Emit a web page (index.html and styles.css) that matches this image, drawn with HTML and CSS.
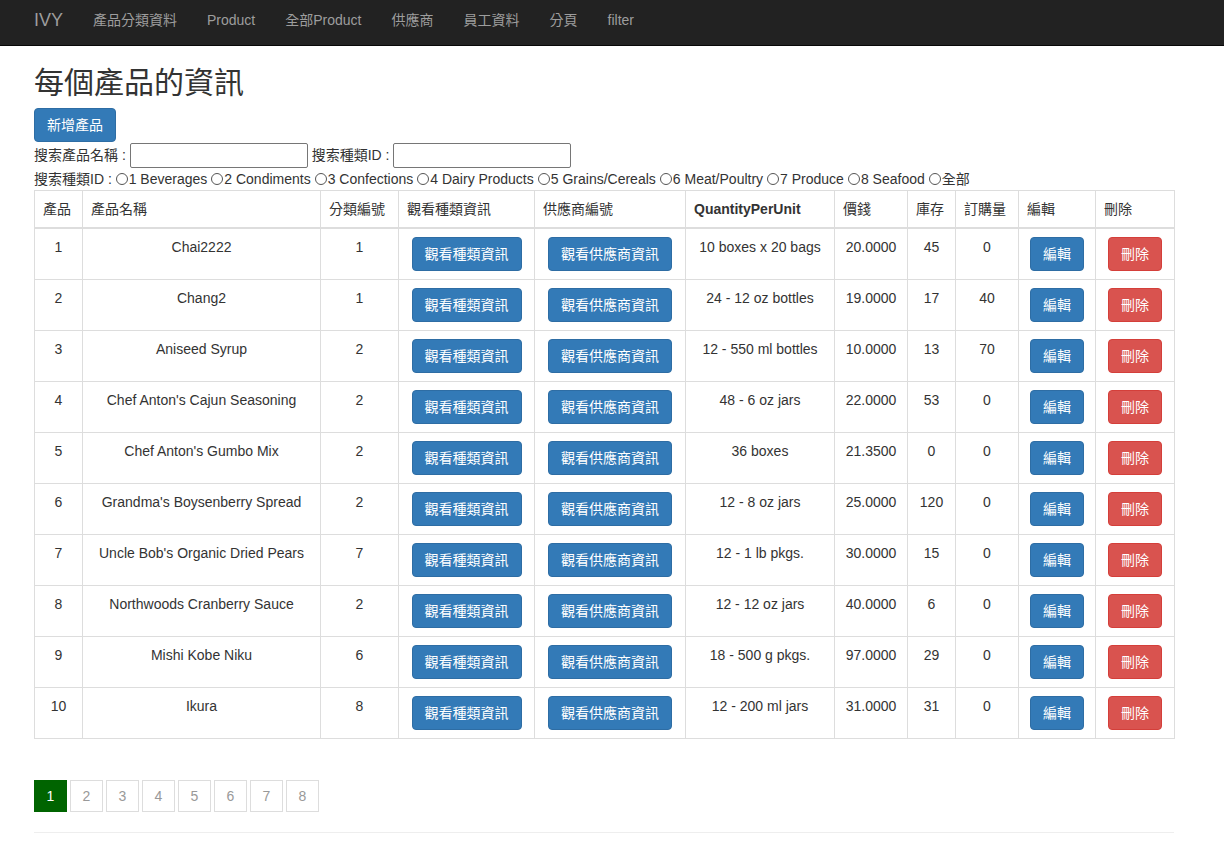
FILE: index.html
```html
<!DOCTYPE html>
<html lang="zh-Hant">
<head>
<meta charset="utf-8">
<title>每個產品的資訊</title>
<link rel="stylesheet" href="styles.css">
</head>
<body>
<nav class="navbar">
  <div class="nav-inner">
    <a class="brand" href="#">IVY</a>
    <a class="nav-link" href="#">產品分類資料</a>
    <a class="nav-link" href="#">Product</a>
    <a class="nav-link" href="#">全部Product</a>
    <a class="nav-link" href="#">供應商</a>
    <a class="nav-link" href="#">員工資料</a>
    <a class="nav-link" href="#">分頁</a>
    <a class="nav-link" href="#">filter</a>
  </div>
</nav>
<main class="container">
  <h2 class="title">每個產品的資訊</h2>
  <a class="btn btn-primary" href="#">新增產品</a>
  <div class="search-row">
    <label class="search-label">搜索產品名稱 : <input class="search-input" type="text"></label>
    <label class="search-label">搜索種類ID : <input class="search-input" type="text"></label>
  </div>
  <div class="radio-row">
    <span>搜索種類ID : </span>
    <label class="radio-item"><input type="radio" name="cat" class="radio">1 Beverages</label>
    <label class="radio-item"><input type="radio" name="cat" class="radio">2 Condiments</label>
    <label class="radio-item"><input type="radio" name="cat" class="radio">3 Confections</label>
    <label class="radio-item"><input type="radio" name="cat" class="radio">4 Dairy Products</label>
    <label class="radio-item"><input type="radio" name="cat" class="radio">5 Grains/Cereals</label>
    <label class="radio-item"><input type="radio" name="cat" class="radio">6 Meat/Poultry</label>
    <label class="radio-item"><input type="radio" name="cat" class="radio">7 Produce</label>
    <label class="radio-item"><input type="radio" name="cat" class="radio">8 Seafood</label>
    <label class="radio-item"><input type="radio" name="cat" class="radio">全部</label>
  </div>
  <table class="table">
    <colgroup>
      <col class="c1"><col class="c2"><col class="c3"><col class="c4"><col class="c5"><col class="c6"><col class="c7"><col class="c8"><col class="c9"><col class="c10"><col class="c11">
    </colgroup>
    <thead>
      <tr>
        <th>產品</th><th>產品名稱</th><th>分類編號</th><th>觀看種類資訊</th><th>供應商編號</th><th class="th-bold">QuantityPerUnit</th><th>價錢</th><th>庫存</th><th>訂購量</th><th>編輯</th><th>刪除</th>
      </tr>
    </thead>
    <tbody>
      <tr><td>1</td><td>Chai2222</td><td>1</td><td><a class="btn btn-primary" href="#">觀看種類資訊</a></td><td><a class="btn btn-primary" href="#">觀看供應商資訊</a></td><td>10 boxes x 20 bags</td><td>20.0000</td><td>45</td><td>0</td><td><a class="btn btn-primary" href="#">編輯</a></td><td><a class="btn btn-danger" href="#">刪除</a></td></tr>
      <tr><td>2</td><td>Chang2</td><td>1</td><td><a class="btn btn-primary" href="#">觀看種類資訊</a></td><td><a class="btn btn-primary" href="#">觀看供應商資訊</a></td><td>24 - 12 oz bottles</td><td>19.0000</td><td>17</td><td>40</td><td><a class="btn btn-primary" href="#">編輯</a></td><td><a class="btn btn-danger" href="#">刪除</a></td></tr>
      <tr><td>3</td><td>Aniseed Syrup</td><td>2</td><td><a class="btn btn-primary" href="#">觀看種類資訊</a></td><td><a class="btn btn-primary" href="#">觀看供應商資訊</a></td><td>12 - 550 ml bottles</td><td>10.0000</td><td>13</td><td>70</td><td><a class="btn btn-primary" href="#">編輯</a></td><td><a class="btn btn-danger" href="#">刪除</a></td></tr>
      <tr><td>4</td><td>Chef Anton's Cajun Seasoning</td><td>2</td><td><a class="btn btn-primary" href="#">觀看種類資訊</a></td><td><a class="btn btn-primary" href="#">觀看供應商資訊</a></td><td>48 - 6 oz jars</td><td>22.0000</td><td>53</td><td>0</td><td><a class="btn btn-primary" href="#">編輯</a></td><td><a class="btn btn-danger" href="#">刪除</a></td></tr>
      <tr><td>5</td><td>Chef Anton's Gumbo Mix</td><td>2</td><td><a class="btn btn-primary" href="#">觀看種類資訊</a></td><td><a class="btn btn-primary" href="#">觀看供應商資訊</a></td><td>36 boxes</td><td>21.3500</td><td>0</td><td>0</td><td><a class="btn btn-primary" href="#">編輯</a></td><td><a class="btn btn-danger" href="#">刪除</a></td></tr>
      <tr><td>6</td><td>Grandma's Boysenberry Spread</td><td>2</td><td><a class="btn btn-primary" href="#">觀看種類資訊</a></td><td><a class="btn btn-primary" href="#">觀看供應商資訊</a></td><td>12 - 8 oz jars</td><td>25.0000</td><td>120</td><td>0</td><td><a class="btn btn-primary" href="#">編輯</a></td><td><a class="btn btn-danger" href="#">刪除</a></td></tr>
      <tr><td>7</td><td>Uncle Bob's Organic Dried Pears</td><td>7</td><td><a class="btn btn-primary" href="#">觀看種類資訊</a></td><td><a class="btn btn-primary" href="#">觀看供應商資訊</a></td><td>12 - 1 lb pkgs.</td><td>30.0000</td><td>15</td><td>0</td><td><a class="btn btn-primary" href="#">編輯</a></td><td><a class="btn btn-danger" href="#">刪除</a></td></tr>
      <tr><td>8</td><td>Northwoods Cranberry Sauce</td><td>2</td><td><a class="btn btn-primary" href="#">觀看種類資訊</a></td><td><a class="btn btn-primary" href="#">觀看供應商資訊</a></td><td>12 - 12 oz jars</td><td>40.0000</td><td>6</td><td>0</td><td><a class="btn btn-primary" href="#">編輯</a></td><td><a class="btn btn-danger" href="#">刪除</a></td></tr>
      <tr><td>9</td><td>Mishi Kobe Niku</td><td>6</td><td><a class="btn btn-primary" href="#">觀看種類資訊</a></td><td><a class="btn btn-primary" href="#">觀看供應商資訊</a></td><td>18 - 500 g pkgs.</td><td>97.0000</td><td>29</td><td>0</td><td><a class="btn btn-primary" href="#">編輯</a></td><td><a class="btn btn-danger" href="#">刪除</a></td></tr>
      <tr><td>10</td><td>Ikura</td><td>8</td><td><a class="btn btn-primary" href="#">觀看種類資訊</a></td><td><a class="btn btn-primary" href="#">觀看供應商資訊</a></td><td>12 - 200 ml jars</td><td>31.0000</td><td>31</td><td>0</td><td><a class="btn btn-primary" href="#">編輯</a></td><td><a class="btn btn-danger" href="#">刪除</a></td></tr>
    </tbody>
  </table>
  <ul class="pagination">
    <li class="page active"><a href="#">1</a></li>
    <li class="page"><a href="#">2</a></li>
    <li class="page"><a href="#">3</a></li>
    <li class="page"><a href="#">4</a></li>
    <li class="page"><a href="#">5</a></li>
    <li class="page"><a href="#">6</a></li>
    <li class="page"><a href="#">7</a></li>
    <li class="page"><a href="#">8</a></li>
  </ul>
  <hr class="divider">
</main>
</body>
</html>
```
FILE: styles.css
```css
* { box-sizing: border-box; }
html, body { margin: 0; padding: 0; }
body {
  font-family: "Liberation Sans", "Noto Sans CJK TC", Arial, sans-serif;
  font-size: 14px;
  line-height: 20px;
  color: #333;
  background: #fff;
}
a { text-decoration: none; }

.navbar {
  height: 46px;
  background: #222;
  border-bottom: 1px solid #080808;
}
.nav-inner {
  display: flex;
  align-items: flex-start;
  padding-left: 34px;
  height: 45px;
}
.brand {
  color: #9d9d9d;
  font-size: 18px;
  line-height: 20px;
  padding: 10px 15px 15px 0;
}
.nav-link {
  color: #9d9d9d;
  font-size: 14px;
  line-height: 20px;
  padding: 10px 15px;
}

.container {
  width: 1174px;
  padding-left: 34px;
}
.title {
  font-size: 30px;
  font-weight: 400;
  line-height: 33px;
  margin: 20px 0 9px;
  color: #333;
}

.btn {
  display: inline-block;
  padding: 6px 12px;
  font-size: 14px;
  line-height: 20px;
  border: 1px solid transparent;
  border-radius: 4px;
  color: #fff;
  text-align: center;
  white-space: nowrap;
  vertical-align: top;
}
.btn-primary { background: #337ab7; border-color: #2e6da4; }
.btn-danger { background: #d9534f; border-color: #d43f3a; }

.search-row {
  display: flex;
  align-items: center;
  height: 26px;
  gap: 4px;
}
.search-label {
  display: flex;
  align-items: center;
  white-space: pre;
}
.search-input {
  width: 178px;
  height: 25px;
  margin: 0;
  border: 1px solid #767676;
  border-radius: 2px;
  padding: 1px 2px;
  font: inherit;
}
.radio-row {
  display: flex;
  align-items: center;
  height: 22px;
  white-space: pre;
  font-size: 14px;
}
.radio-item {
  display: flex;
  align-items: center;
  margin-right: 4px;
}
.radio {
  appearance: none;
  -webkit-appearance: none;
  width: 12px;
  height: 12px;
  margin: 0 1px 0 0;
  border: 1px solid #555;
  border-radius: 50%;
  background: #fff;
}

.table {
  width: 1140px;
  table-layout: fixed;
  border-collapse: collapse;
  border: 1px solid #ddd;
  margin: 0 0 20px;
}
.c1 { width: 48px; } .c2 { width: 238px; } .c3 { width: 78px; } .c4 { width: 136px; }
.c5 { width: 151px; } .c6 { width: 149px; } .c7 { width: 73px; } .c8 { width: 48px; }
.c9 { width: 63px; } .c10 { width: 77px; } .c11 { width: 79px; }
.table th, .table td {
  border: 1px solid #ddd;
  padding: 8px;
  line-height: 20px;
}
.table th {
  text-align: left;
  font-weight: 400;
  vertical-align: bottom;
  border-bottom: 2px solid #ddd;
  white-space: nowrap;
}
.table th.th-bold { font-weight: 700; }
.table td {
  text-align: center;
  vertical-align: top;
  height: 51px;
}

.pagination {
  list-style: none;
  display: flex;
  gap: 3px;
  margin: 0;
  padding: 21px 0 20px;
}
.page a {
  display: block;
  width: 33px;
  height: 32px;
  line-height: 30px;
  text-align: center;
  border: 1px solid #ddd;
  color: #999;
  font-size: 14px;
}
.page.active a {
  background: #006400;
  border-color: #006400;
  color: #fff;
}
.divider {
  width: 1140px;
  margin: 0;
  border: 0;
  border-top: 1px solid #eee;
}
```
